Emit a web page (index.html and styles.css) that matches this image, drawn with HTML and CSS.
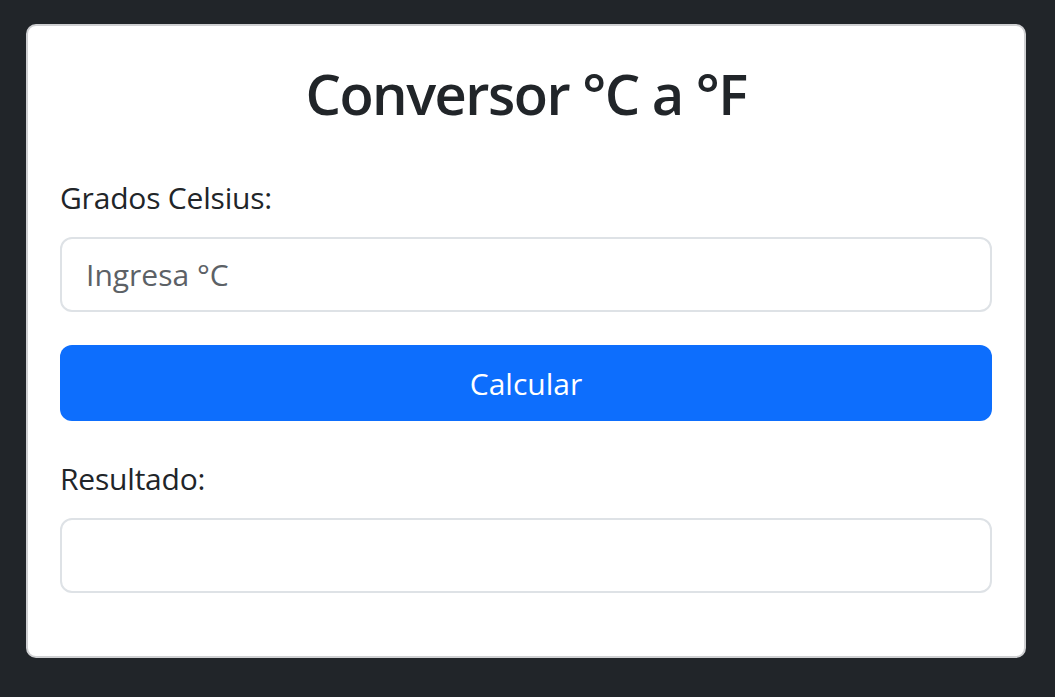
FILE: index.html
```html
<!DOCTYPE html>
<html lang="es">
<head>
<meta charset="utf-8">
<title>Conversor °C a °F</title>
<link rel="stylesheet" href="styles.css">
</head>
<body>
  <main class="card">
    <h1 class="title">Conversor °C a °F</h1>
    <div class="field">
      <label class="label" for="celsius">Grados Celsius:</label>
      <input class="input" id="celsius" type="number" placeholder="Ingresa °C">
    </div>
    <button class="btn" type="button">Calcular</button>
    <div class="field">
      <label class="label" for="resultado">Resultado:</label>
      <input class="input" id="resultado" type="text" readonly>
    </div>
  </main>
</body>
</html>
```

FILE: styles.css
```css
html, body {
  margin: 0;
  padding: 0;
  background: #212529;
}

body {
  padding: 24px 0 0 26px;
  font-family: "Open Sans", "Noto Sans", sans-serif;
  color: #212529;
}

.card {
  box-sizing: border-box;
  width: 1000px;
  height: 634px;
  background: #fff;
  border: 2px solid #cfd0d2;
  border-radius: 10px;
  padding: 30px 32px 0 32px;
  display: flex;
  flex-direction: column;
}

.title {
  margin: 0 0 44px 0;
  font-size: 56px;
  line-height: 75px;
  font-weight: 600;
  text-align: center;
  letter-spacing: -1.5px;
}

.field {
  display: flex;
  flex-direction: column;
}

.label {
  font-size: 30px;
  line-height: 45px;
  margin-bottom: 17px;
  letter-spacing: -0.2px;
}

.input {
  box-sizing: border-box;
  height: 75px;
  width: 100%;
  border: 2px solid #dee2e6;
  border-radius: 12px;
  padding: 0 24px;
  font-family: inherit;
  font-size: 30px;
  color: #212529;
  background: #fff;
  outline: none;
}

.input::placeholder {
  color: #5c6166;
}

.btn {
  margin: 33px 0 35px 0;
  height: 76px;
  border: none;
  border-radius: 12px;
  background: #0d6efd;
  color: #fff;
  font-family: inherit;
  font-size: 30px;
  cursor: pointer;
}
```
